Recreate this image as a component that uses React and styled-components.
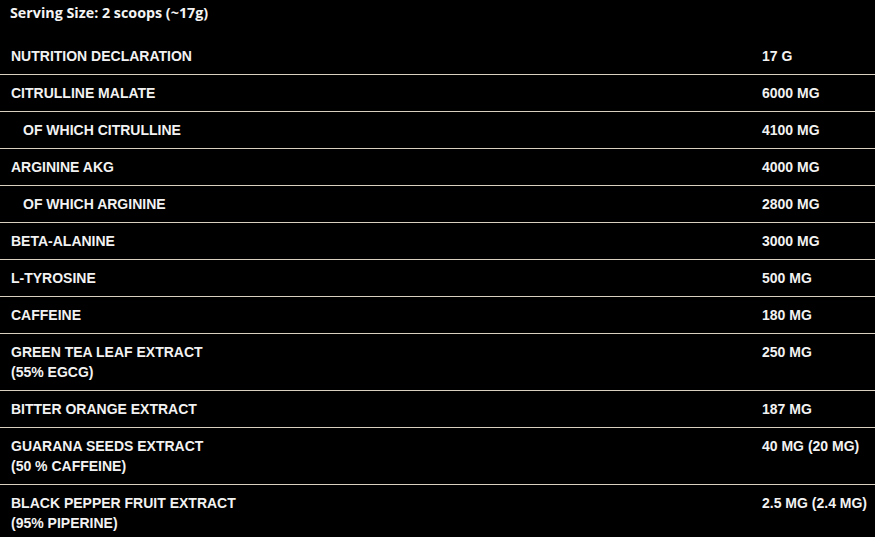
import React from "react";
import styled, { createGlobalStyle } from "styled-components";

const Global = createGlobalStyle`
  html, body { margin: 0; padding: 0; background: #000; }
  body { font-family: "Liberation Sans", Arial, sans-serif; color: #fff; }
`;

const Page = styled.div`
  background: #000;
  width: 875px;
  min-height: 537px;
  overflow: hidden;
`;

const Serving = styled.div`
  font-family: "Open Sans", "Noto Sans", sans-serif;
  font-weight: 700;
  font-size: 14.3px;
  line-height: 26px;
  padding-left: 10px;
  color: #f4f4f4;
  height: 38px;
  box-sizing: border-box;
`;

const Table = styled.div`
  display: flex;
  flex-direction: column;
`;

const Row = styled.div`
  display: grid;
  grid-template-columns: 762px 1fr;
  padding: 8px 0 8px;
  border-top: ${(p) => (p.$first ? "none" : "1px solid #d9d0bf")};
  font-weight: 700;
  font-size: 14px;
  line-height: 20px;
  color: #f2f2f2;
`;

const Name = styled.div`
  padding-left: ${(p) => (p.$sub ? "23px" : "11px")};
`;

const Value = styled.div``;

const rows = [
  ["NUTRITION DECLARATION", "17 G"],
  ["CITRULLINE MALATE", "6000 MG"],
  ["OF WHICH CITRULLINE", "4100 MG", true],
  ["ARGININE AKG", "4000 MG"],
  ["OF WHICH ARGININE", "2800 MG", true],
  ["BETA-ALANINE", "3000 MG"],
  ["L-TYROSINE", "500 MG"],
  ["CAFFEINE", "180 MG"],
  [["GREEN TEA LEAF EXTRACT", "(55% EGCG)"], "250 MG"],
  ["BITTER ORANGE EXTRACT", "187 MG"],
  [["GUARANA SEEDS EXTRACT", "(50 % CAFFEINE)"], "40 MG (20 MG)"],
  [["BLACK PEPPER FRUIT EXTRACT", "(95% PIPERINE)"], "2.5 MG (2.4 MG)"],
];

export default function App() {
  return (
    <Page>
      <Global />
      <Serving>Serving Size: 2 scoops (~17g)</Serving>
      <Table>
        {rows.map(([name, value, sub], i) => (
          <Row key={i} $first={i === 0}>
            <Name $sub={sub}>
              {Array.isArray(name)
                ? name.map((n, j) => <div key={j}>{n}</div>)
                : name}
            </Name>
            <Value>{value}</Value>
          </Row>
        ))}
      </Table>
    </Page>
  );
}
